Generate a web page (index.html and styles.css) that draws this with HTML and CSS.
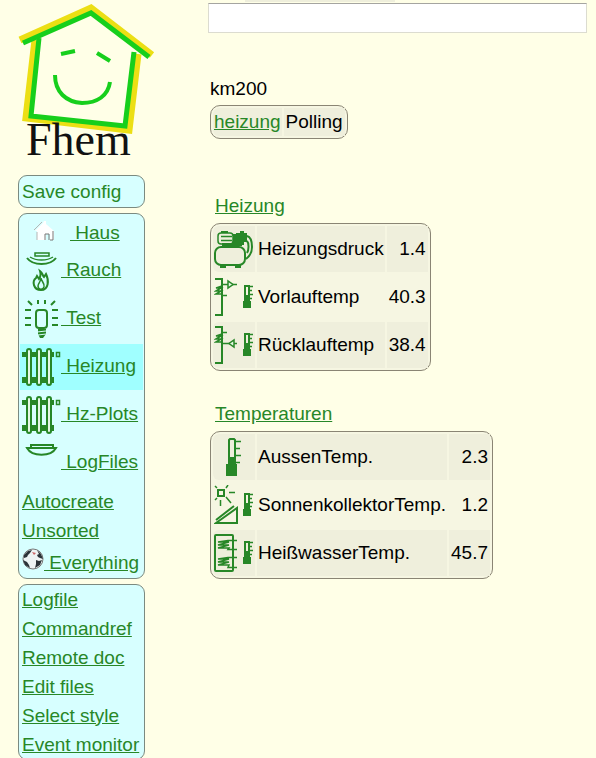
FILE: index.html
```html
<!DOCTYPE html>

<html lang="de">
<head>
    <meta charset="utf-8">
    <title>Fhem</title>

    <link rel="stylesheet" href="styles.css">
</head>
<body>
    <!-- Shared icon shapes -->
    <svg class="defs" width="0" height="0" aria-hidden="true">
        <symbol id="radiator" viewBox="0 0 40 40">
            <path class="fill" d="M1 5h32v5H1zM1 30h32v6H1z"/>
            <rect class="hollow" x="6" y="2" width="4" height="36" rx="2"/>
            <rect class="hollow" x="16" y="2" width="4" height="36" rx="2"/>
            <rect class="hollow" x="26" y="2" width="4" height="36" rx="2"/>
            <path class="thin" d="M35.500 5.500h3v4h-3z"/>
        </symbol>
        <symbol id="thermo" viewBox="0 0 10 24">
            <path d="M2 12V1h4v11"/>
            <path class="fill" d="M1 10h6v6h1v7H0v-7h1z"/>
            <path class="thin" d="M6 1.500h4M6 5.500h3M6 9.500h4M6 13.500h3"/>
        </symbol>
    </svg>

    <div class="page">
        <nav class="sidebar">
            <svg class="logo" width="137" height="160" viewBox="0 0 137 160" role="img" aria-label="Fhem">
                <g class="roofShade">
                    <path d="M17 40L8 118l103 12 9-76"/>
                    <path d="M2 40L73 8l61 47"/>
                </g>
                <g class="roof">
                    <path d="M21 38L13 116l94 10 9-74"/>
                    <path d="M5 43L73 13l58 44"/>
                </g>
                <g class="face">
                    <path d="M43 54l14-3M79 53l13 8"/>
                    <path d="M37 75c0 17 11 27 27 28 15 0 26-7 28-21"/>
                </g>
                <text x="8" y="155">Fhem</text>
            </svg>

            <ul class="box save">
                <li><a href="#">Save config</a></li>
            </ul>

            <ul class="box rooms">
                <li class="small haus"><a href="#">
                    <svg width="21" height="22" viewBox="0 0 21 22">
                        <path class="house" d="M1 11L9 3l1-2h2v3l8 7v9h-4v-6h-4v6H3v-9z"/>
                        <path class="houseLine" d="M0 10l8-8M3 12v8"/>
                        <path class="houseDoor" d="M11 20v-6h4v6M19 11v9h-3"/>
                    </svg><span>&nbsp;Haus</span></a></li>
                <li class="icon"><a href="#">
                    <svg width="40" height="40" viewBox="0 0 40 40">
                        <path class="thin" d="M14 2h14v3H14zM9 6c6 4 17 4 23 0"/>
                        <path d="M6 7c6 8 23 8 29 0"/>
                        <path d="M19 20c3 2 2 4 4 6l2-3c3 6 3 16-5 16s-9-9-5-12l1-2 2 3c2-3 2-5 1-8z"/>
                        <path class="thin" d="M20 27c0 3 4 5 3 9-1 3-6 3-6-1 0-3 3-4 3-8z"/>
                    </svg><span>&nbsp;Rauch</span></a></li>
                <li class="icon"><a href="#">
                    <svg width="40" height="40" viewBox="0 0 40 40">
                        <rect x="15" y="11" width="11" height="18" rx="3"/>
                        <path class="fill" d="M17 30h8v5l-3 4h-3l-2-4z"/>
                        <path class="cut" d="M16 33l9-1M17 36l8-1"/>
                        <path d="M7 2l4 4M17 1v4M24 1v4M34 2l-4 4M4 11h6M4 19h6M4 26h6M31 11h6M31 19h6M31 26h6"/>
                    </svg><span>&nbsp;Test</span></a></li>
                <li class="icon current"><a href="#">
                    <svg width="40" height="40"><use href="#radiator"/></svg><span>&nbsp;Heizung</span></a></li>
                <li class="icon"><a href="#">
                    <svg width="40" height="40"><use href="#radiator"/></svg><span>&nbsp;Hz-Plots</span></a></li>
                <li class="icon"><a href="#">
                    <svg width="40" height="40" viewBox="0 0 40 40">
                        <path d="M10 5V2h22v3M6 5h29c-5 9-24 9-29 0z"/>
                    </svg><span>&nbsp;LogFiles</span></a></li>
                <li><a href="#">Autocreate</a></li>
                <li><a href="#">Unsorted</a></li>
                <li class="small"><a href="#">
                    <svg class="world" width="22" height="22" viewBox="0 0 22 22">
                        <circle class="globe" cx="11" cy="11" r="10"/>
                        <path class="land" d="M2 7l4-4 4-1-2 3-2 2-1 2-3 1zM15 2l4 4 2 5-3-1-2-1-1-2 2-1zM1 12l4 2 2 3 1 3-5-3zM14 12l3 1 3-1-2 5-5 3 1-4z"/>
                        <path class="landRed" d="M10 4l4 1-2 2z"/>
                    </svg><span>&nbsp;Everything</span></a></li>
            </ul>

            <ul class="box">
                <li><a href="#">Logfile</a></li>
                <li><a href="#">Commandref</a></li>
                <li><a href="#">Remote doc</a></li>
                <li><a href="#">Edit files</a></li>
                <li><a href="#">Select style</a></li>
                <li><a href="#">Event monitor</a></li>
            </ul>
        </nav>

        <main class="content">
            <div class="strip"></div>
            <input class="command" type="text" aria-label="Command">

            <h2 class="plain">km200</h2>
            <table class="readings polling">
                <tr>
                    <td><a href="#">heizung</a></td>
                    <td>Polling</td>
                </tr>
            </table>

            <h2><a href="#">Heizung</a></h2>
            <table class="readings">
                <tr>
                    <td class="pic">
                        <svg width="40" height="40" viewBox="0 0 40 40">
                            <rect x="1" y="18" width="30" height="18" rx="6"/>
                            <path class="fill" d="M6 36h6v3H6zM21 36h6v3h-6zM19 5h3V4h4V2h4v2h3v9h-3v3H19zM7 2h7v2H7zM8 14h20v3H8z"/>
                            <rect class="thin" x="4" y="4" width="15" height="11" rx="3"/>
                            <path class="thin" d="M7 7.500h11M7 11.500h11"/>
                            <path d="M33 7c4 1 5 5 5 11 0 5-2 9-6 12M33 12c2 2 2 9 0 12"/>
                        </svg>
                    </td>
                    <td>Heizungsdruck</td>
                    <td class="value">1.4</td>
                </tr>
                <tr>
                    <td class="pic">
                        <svg width="40" height="40" viewBox="0 0 40 40">
                            <path d="M1 2h7v36H1"/>
                            <path class="thin" d="M8 7.500h15M8 18.500h5M8 9l-6 2h5l-5 3h5l-5 3h6"/>
                            <path class="hollow thin" d="M14 4v7l5-3.500z"/>
                            <use href="#thermo" x="29" y="8" width="10" height="24"/>
                        </svg>
                    </td>
                    <td>Vorlauftemp</td>
                    <td class="value">40.3</td>
                </tr>
                <tr>
                    <td class="pic">
                        <svg width="40" height="40" viewBox="0 0 40 40">
                            <path d="M1 2h7v36H1"/>
                            <path class="thin" d="M8 18.500h15M8 7.500h5M8 9l-6 2h5l-5 3h5l-5 3h6"/>
                            <path class="hollow thin" d="M20 15v7l-5-3.500z"/>
                            <use href="#thermo" x="29" y="8" width="10" height="24"/>
                        </svg>
                    </td>
                    <td>Rücklauftemp</td>
                    <td class="value">38.4</td>
                </tr>
            </table>

            <h2><a href="#">Temperaturen</a></h2>
            <table class="readings">
                <tr>
                    <td class="pic">
                        <svg width="40" height="40" viewBox="0 0 40 40">
                            <path d="M15 22V3l1-1h4l1 1v19"/>
                            <path class="fill" d="M14 20h8v7h1v12H12V27h2z"/>
                            <path class="thin" d="M22 4.500h5M22 11.500h4M22 18.500h5M22 25.500h4"/>
                        </svg>
                    </td>
                    <td>AussenTemp.</td>
                    <td class="value">2.3</td>
                </tr>
                <tr>
                    <td class="pic">
                        <svg width="40" height="40" viewBox="0 0 40 40">
                            <path d="M4 5h6v6H4z"/>
                            <path class="thin" d="M12 3l2-3M15 7.500h6M12 12l5 6M6.500 15v6M3 13l-2 2M3 3L1 1"/>
                            <path d="M2 38h21V23zM2 35l18-14"/>
                            <use href="#thermo" x="29" y="8" width="10" height="24"/>
                        </svg>
                    </td>
                    <td>SonnenkollektorTemp.</td>
                    <td class="value">1.2</td>
                </tr>
                <tr>
                    <td class="pic">
                        <svg width="40" height="40" viewBox="0 0 40 40">
                            <rect x="1" y="2" width="18" height="36" rx="1"/>
                            <path class="thin" d="M23 7.500h-9L4 9h11L4 12h11L4 15h11l-1 1.500h9M23 24.500h-9L4 26h11L4 29h11L4 32h11l-1 2.500h9"/>
                            <use href="#thermo" x="29" y="8" width="10" height="24"/>
                        </svg>
                    </td>
                    <td>HeißwasserTemp.</td>
                    <td class="value">45.7</td>
                </tr>
            </table>
        </main>
    </div>
</body>
</html>
```
FILE: styles.css
```css
body {
    padding: 0px;
    margin: 0px;
    background-color: #ffffe7;
    color: black;
    font: 19px/22px 'Liberation Sans', Arial, sans-serif;
}

a {
    color: #278727;
}

.defs {
    position: absolute;
}

.page {
    display: flex;
    gap: 63px;
    padding: 0px 9px 0px 18px;
}

.sidebar {
    flex: none;
    width: 127px;
}

.logo {
    display: block;
    overflow: visible;
    margin-bottom: 15px;
}

    .logo path {
        fill: none;
    }

    .logo text {
        font: 46px 'Liberation Serif', serif;
        fill: #111;
    }

.roofShade {
    stroke: #ecdf14;
    stroke-width: 7;
}

.roof,
.face {
    stroke: #16cf1c;
    stroke-width: 5;
}

.face {
    stroke-width: 4;
}

/* Menu boxes */

.box {
    display: grid;
    gap: 2px;
    margin: 0px 0px 5px;
    padding: 1px;
    list-style: none;
    border: 1px solid #7b8a80;
    border-radius: 9px;
    background-color: #d7ffff;
}

    .box li {
        display: flex;
        align-items: center;
        min-height: 27px;
        padding-left: 2px;
        white-space: nowrap;
    }

    .box a {
        display: flex;
        align-items: center;
    }

    .box .icon {
        min-height: 46px;
        padding-left: 1px;
    }

    .box .icon span {
        padding-bottom: 2px;
    }

    .box .small {
        min-height: 31px;
    }

    .box .small span {
        padding-top: 3px;
    }

    .box .haus {
        padding-left: 14px;
    }

    .box .haus span {
        padding-top: 4px;
    }

    .box .world {
        margin-bottom: 5px;
    }

.haus svg {
    margin-right: 15px;
}

.box .current {
    background-color: #a0ffff;
}

.save li {
    min-height: 29px;
}

.save a {
    text-decoration: none;
}

/* Icons */

.icon svg,
.pic svg,
symbol {
    display: block;
    fill: none;
    stroke: #278727;
    stroke-width: 2;
}

svg .thin {
    stroke-width: 1.5;
}

svg .fill {
    fill: #278727;
    stroke: none;
}

svg .hollow {
    fill: #e4f8e4;
}

svg .cut {
    stroke: #d7ffff;
    stroke-width: 1;
}

.house {
    fill: #fff;
}

.houseLine,
.houseDoor {
    fill: none;
    stroke: #b5b5b5;
}

.houseDoor {
    stroke: #777;
}

.globe {
    fill: #eef4f4;
    stroke: #777;
    stroke-width: 1;
}

.land {
    fill: #2b3338;
}

.landRed {
    fill: #c66;
}

/* Content */

.content {
    flex: 1;
    min-width: 0px;
}

.strip {
    width: 150px;
    height: 2px;
    margin: 0px 0px 1px 37px;
    background-color: #efefdc;
}

.command {
    display: block;
    box-sizing: border-box;
    width: 100%;
    height: 30px;
    border: 1px solid #dcdcd0;
    border-top-color: #a5a5a0;
    background-color: #fff;
    font: inherit;
}

h2 {
    margin: 32px 0px 6px 7px;
    font-size: 19px;
    font-weight: normal;
}

    h2.plain {
        margin: 45px 0px 5px 2px;
    }

.readings {
    margin-left: 2px;
    border: 1px solid #8a8574;
    border-radius: 10px;
    border-spacing: 2px;
    background-color: #f6f6e2;
}

    .readings td {
        height: 46px;
        padding: 0px 1px;
        box-sizing: border-box;
    }

    .readings tr:nth-child(odd) td {
        background-color: #efefdc;
    }

    .readings .value {
        padding: 0px 2px;
        text-align: right;
    }

    .readings td:first-child {
        border-radius: 6px 0px 0px 6px;
    }

.polling {
    margin-bottom: 56px;
}

    .polling td {
        height: 28px;
    }

    .polling td + td {
        padding: 0px 2px;
    }
```
